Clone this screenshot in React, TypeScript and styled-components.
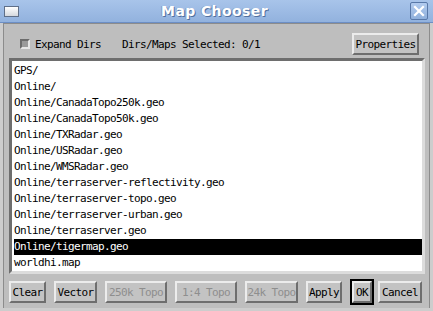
import styled, { createGlobalStyle } from "styled-components";

const GlobalStyle = createGlobalStyle`
  html, body {
    margin: 0;
    padding: 0;
    background: #bebebe;
  }
`;

const maps = [
  "GPS/",
  "Online/",
  "Online/CanadaTopo250k.geo",
  "Online/CanadaTopo50k.geo",
  "Online/TXRadar.geo",
  "Online/USRadar.geo",
  "Online/WMSRadar.geo",
  "Online/terraserver-reflectivity.geo",
  "Online/terraserver-topo.geo",
  "Online/terraserver-urban.geo",
  "Online/terraserver.geo",
  "Online/tigermap.geo",
  "worldhi.map",
];

const selected = "Online/tigermap.geo";

export default function App() {
  return (
    <>
      <GlobalStyle />
      <Window>
        <TitleBar>
          <MenuIcon />
          <Title>Map Chooser</Title>
          <CloseButton>
            <svg width="12" height="12" viewBox="0 0 12 12">
              <path d="M2 2 L10 10 M10 2 L2 10" stroke="#fff" strokeWidth="2.2" strokeLinecap="square" />
            </svg>
          </CloseButton>
        </TitleBar>
        <Frame>
          <Panel>
            <TopRow>
              <CheckLabel>
                <CheckBox />
                Expand Dirs
              </CheckLabel>
              <Status>Dirs/Maps Selected: 0/1</Status>
              <Button $w={67}>Properties</Button>
            </TopRow>
            <ListBox>
              {maps.map((m) => (
                <Item key={m} $selected={m === selected}>
                  {m}
                </Item>
              ))}
            </ListBox>
            <ButtonRow>
              <Button $w={37}>Clear</Button>
              <Button $w={43}>Vector</Button>
              <Button $w={62} disabled>250k Topo</Button>
              <Button $w={62} disabled>1:4 Topo</Button>
              <Button $w={53} disabled>24k Topo</Button>
              <Button $w={36}>Apply</Button>
              <DefaultRing>
                <Button $w={20}>OK</Button>
              </DefaultRing>
              <Button $w={44}>Cancel</Button>
            </ButtonRow>
          </Panel>
        </Frame>
      </Window>
    </>
  );
}

const Window = styled.div`
  width: 433px;
  height: 311px;
  display: flex;
  flex-direction: column;
  background: #bebebe;
  font-family: "DejaVu Sans Mono", "Liberation Mono", monospace;
  font-size: 11px;
  letter-spacing: -0.62px;
  color: #000;
  overflow: hidden;
`;

const TitleBar = styled.div`
  height: 22px;
  flex: none;
  display: flex;
  align-items: center;
  padding: 0 5px 0 4px;
  background: linear-gradient(#a8c4ea, #92b2de);
  border-bottom: 1px solid #6c8ec4;
`;

const MenuIcon = styled.div`
  width: 13px;
  height: 9px;
  border: 1px solid #5f6f88;
  background: linear-gradient(#ffffff, #d4d8de);
`;

const Title = styled.div`
  flex: 1;
  text-align: center;
  font-family: "DejaVu Sans", Verdana, sans-serif;
  font-weight: bold;
  font-size: 14px;
  letter-spacing: 0.4px;
  color: #fff;
  text-shadow: 1px 1px 0 #51709f, -1px 0 0 #7f9dc9;
`;

const CloseButton = styled.div`
  width: 16px;
  height: 16px;
  display: flex;
  align-items: center;
  justify-content: center;
  border: 1px solid #5878a8;
  border-radius: 2px;
  background: linear-gradient(#b2cbee, #8fb0dc);
`;

const Frame = styled.div`
  flex: 1;
  display: flex;
  border-left: 3px solid #cdcdcd;
  border-right: 3px solid #cdcdcd;
  border-bottom: 3px solid #cdcdcd;
`;

const Panel = styled.div`
  flex: 1;
  display: flex;
  flex-direction: column;
  padding: 10px 4px 0 5px;
  border-left: 1px solid #8c8c8c;
  border-top: 1px solid #8c8c8c;
  border-right: 1px solid #8c8c8c;
`;

const TopRow = styled.div`
  height: 20px;
  display: flex;
  align-items: center;
  padding: 0 6px 0 11px;
  margin-bottom: 4px;
`;

const CheckLabel = styled.label`
  display: flex;
  align-items: center;
  gap: 5px;
`;

const CheckBox = styled.span`
  width: 6px;
  height: 6px;
  background: #9a9a9a;
  border-top: 2px solid #6c6c6c;
  border-left: 2px solid #6c6c6c;
  border-bottom: 2px solid #e6e6e6;
  border-right: 2px solid #e6e6e6;
`;

const Status = styled.span`
  margin-left: 21px;
  flex: 1;
`;

const Button = styled.button<{ $w: number }>`
  width: ${({ $w }) => $w}px;
  height: 22px;
  flex: none;
  padding: 0;
  white-space: nowrap;
  text-align: center;
  font: inherit;
  letter-spacing: inherit;
  color: ${({ disabled }) => (disabled ? "#8e8e8e" : "#000")};
  background: #c3c3c3;
  border-top: 2px solid #ececec;
  border-left: 2px solid #ececec;
  border-bottom: 2px solid #6e6e6e;
  border-right: 2px solid #6e6e6e;
  border-radius: 0;
  cursor: default;
`;

const DefaultRing = styled.div`
  display: flex;
  flex: none;
  border: 2px solid #000;
  margin-right: -4px;
`;

const ListBox = styled.div`
  height: 208px;
  padding: 2px 0 0 2px;
  background: #fff;
  border-top: 3px solid #6e6e6e;
  border-left: 3px solid #6e6e6e;
  border-bottom: 3px solid #dcdcdc;
  border-right: 3px solid #dcdcdc;
  display: flex;
  flex-direction: column;
`;

const Item = styled.div<{ $selected?: boolean }>`
  height: 16px;
  line-height: 16px;
  white-space: nowrap;
  background: ${({ $selected }) => ($selected ? "#000" : "transparent")};
  color: ${({ $selected }) => ($selected ? "#fff" : "#000")};
`;

const ButtonRow = styled.div`
  display: flex;
  align-items: center;
  gap: 8px;
  margin-top: 6px;
  height: 24px;
`;
